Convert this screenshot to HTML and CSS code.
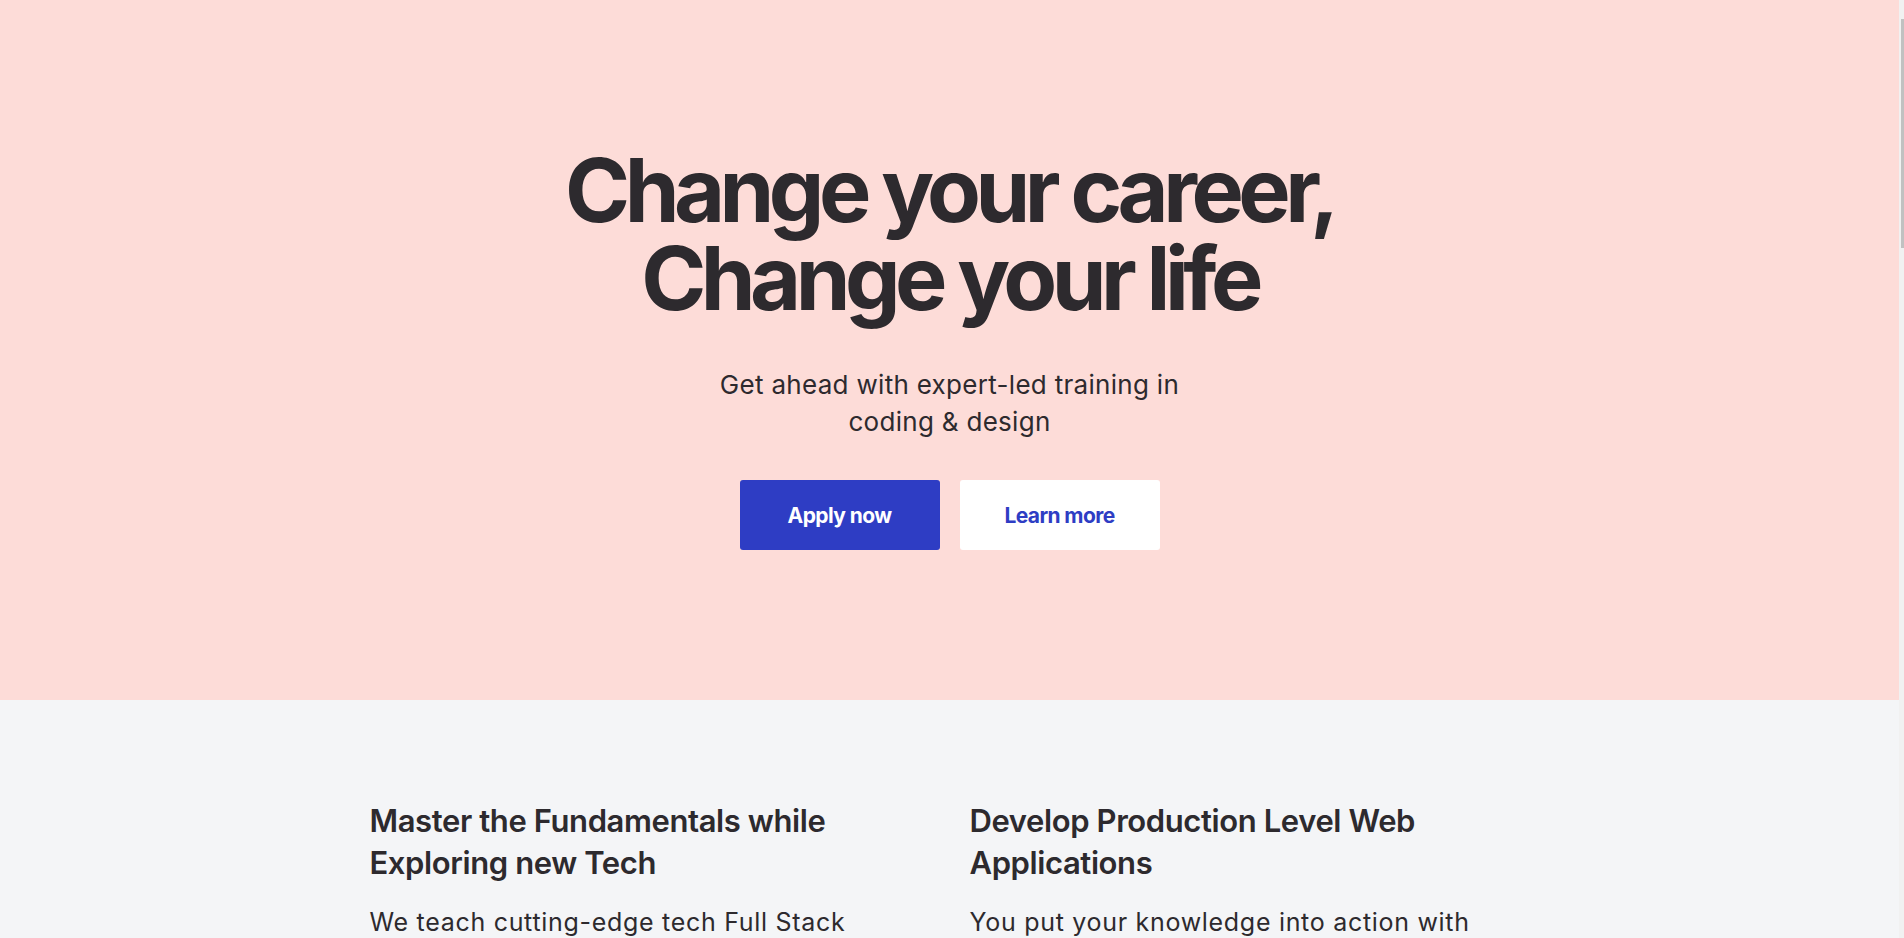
FILE: index.html
```html
<!DOCTYPE html>
<html lang="en">
<head>
<meta charset="utf-8">
<title>Change your career</title>
<link rel="stylesheet" href="styles.css">
</head>
<body>
<main class="page">
  <section class="hero">
    <h1 class="hero-title">Change your career,<br>Change your life</h1>
    <p class="hero-sub">Get ahead with expert-led training in coding &amp; design</p>
    <div class="hero-actions">
      <a class="btn btn-primary" href="#">Apply now</a>
      <a class="btn btn-secondary" href="#">Learn more</a>
    </div>
  </section>
  <section class="features">
    <div class="features-grid">
      <article class="feature">
        <h2 class="feature-title">Master the Fundamentals while Exploring new Tech</h2>
        <p class="feature-text">We teach cutting-edge tech Full Stack development, from the fundamentals of the web to modern frameworks and tooling used by professional teams.</p>
      </article>
      <article class="feature">
        <h2 class="feature-title">Develop Production Level Web Applications</h2>
        <p class="feature-text">You put your knowledge into action with practical projects, building and shipping applications the way professional developers do every day.</p>
      </article>
    </div>
  </section>
</main>
<div class="scrollbar" aria-hidden="true"><div class="scrollbar-thumb"></div></div>
</body>
</html>
```

FILE: styles.css
```css
html {
  background: #f4f5f7;
}

body {
  margin: 0;
  padding-right: 5px;
  font-family: Inter, "Noto Sans", "Liberation Sans", sans-serif;
  color: #2d2a2e;
}

.page {
  display: block;
}

.hero {
  background: #fddcd8;
  display: flex;
  flex-direction: column;
  align-items: center;
  text-align: center;
  padding: 146px 20px 150px;
}

.hero-title {
  margin: 0;
  font-size: 88px;
  line-height: 88px;
  font-weight: 700;
  letter-spacing: -5.5px;
  color: #2d2a2e;
}

.hero-sub {
  margin: 44px 0 0;
  max-width: 500px;
  font-size: 26px;
  line-height: 37px;
  font-weight: 400;
  letter-spacing: 0.3px;
}

.hero-actions {
  display: flex;
  gap: 20px;
  margin-top: 40px;
}

.btn {
  width: 200px;
  height: 70px;
  display: flex;
  align-items: center;
  justify-content: center;
  border-radius: 3px;
  font-size: 21px;
  font-weight: 700;
  letter-spacing: -0.6px;
  text-decoration: none;
}

.btn-primary {
  background: #2e3dc4;
  color: #ffffff;
}

.btn-secondary {
  background: #ffffff;
  color: #2e3dc4;
}

.features {
  background: #f4f5f7;
  padding: 100px 20px 120px;
}

.features-grid {
  max-width: 1160px;
  margin: 0 auto;
  display: grid;
  grid-template-columns: 1fr 1fr;
  column-gap: 40px;
}

.feature-title {
  margin: 0;
  font-size: 31px;
  line-height: 42px;
  font-weight: 600;
  letter-spacing: -0.4px;
}

.feature-text {
  margin: 20px 0 0;
  font-size: 25px;
  line-height: 36px;
  letter-spacing: 0.7px;
}

.scrollbar {
  position: fixed;
  top: 0;
  right: 0;
  width: 5px;
  height: 100vh;
  background: #f1f1f1;
  display: flex;
  justify-content: flex-end;
}

.scrollbar-thumb {
  width: 3px;
  height: 229px;
  margin-top: 19px;
  background: #c1c1c1;
}
```
